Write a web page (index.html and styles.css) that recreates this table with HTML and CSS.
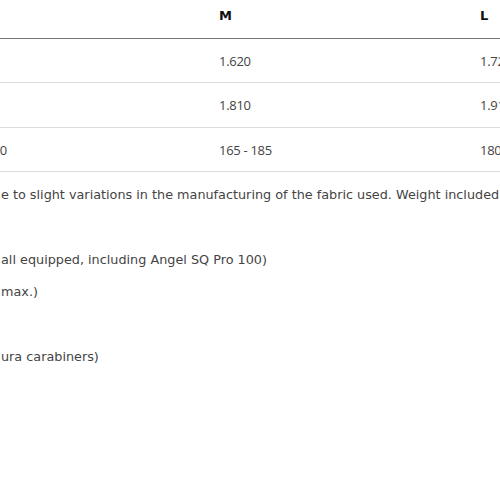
FILE: index.html
```html
<!DOCTYPE html>
<html>
<head>
<meta charset="utf-8">
<link rel="stylesheet" href="styles.css">
</head>
<body>
<div class="page">
  <div class="sizes">
    <div class="row head">
      <div class="cell">S</div>
      <div class="cell">M</div>
      <div class="cell">L</div>
    </div>
    <div class="row r1">
      <div class="cell">1.520</div>
      <div class="cell">1.620</div>
      <div class="cell">1.720</div>
    </div>
    <div class="row r2">
      <div class="cell">1.710</div>
      <div class="cell">1.810</div>
      <div class="cell">1.910</div>
    </div>
    <div class="row r3">
      <div class="cell">150 - 170</div>
      <div class="cell">165 - 185</div>
      <div class="cell">180 - 200</div>
    </div>
  </div>
  <div class="notes">
    <p class="line">e to slight variations in the manufacturing of the fabric used. Weight included</p>
    <p class="line"></p>
    <p class="line">all equipped, including Angel SQ Pro 100)</p>
    <p class="line">max.)</p>
    <p class="line"></p>
    <p class="line">ura carabiners)</p>
  </div>
</div>
</body>
</html>
```

FILE: styles.css
```css
html, body {
  margin: 0;
  padding: 0;
  background: #fff;
  overflow: hidden;
}
.page {
  width: 500px;
  height: 500px;
  overflow: hidden;
  font-family: "DejaVu Sans", sans-serif;
  font-size: 12.8px;
  color: #444;
}
.sizes {
  margin-left: -46px;
  width: 800px;
  font-family: "Open Sans", sans-serif;
  font-size: 13px;
  letter-spacing: -0.3px;
}
.row {
  display: grid;
  grid-template-columns: 265px 261px 261px;
  height: 44px;
  align-items: center;
  border-bottom: 1px solid #dcdcdc;
  box-sizing: border-box;
}
.r2 {
  height: 45px;
}
.head {
  height: 39px;
  align-items: start;
  padding-top: 8px;
  border-bottom: 1px solid #777;
  font-family: "DejaVu Sans", sans-serif;
  font-weight: 700;
  letter-spacing: 0;
  color: #111;
}
.notes {
  padding-top: 7px;
  padding-left: 1px;
}
.line {
  margin: 0;
  height: 32.4px;
  line-height: 32px;
  white-space: nowrap;
}
```
